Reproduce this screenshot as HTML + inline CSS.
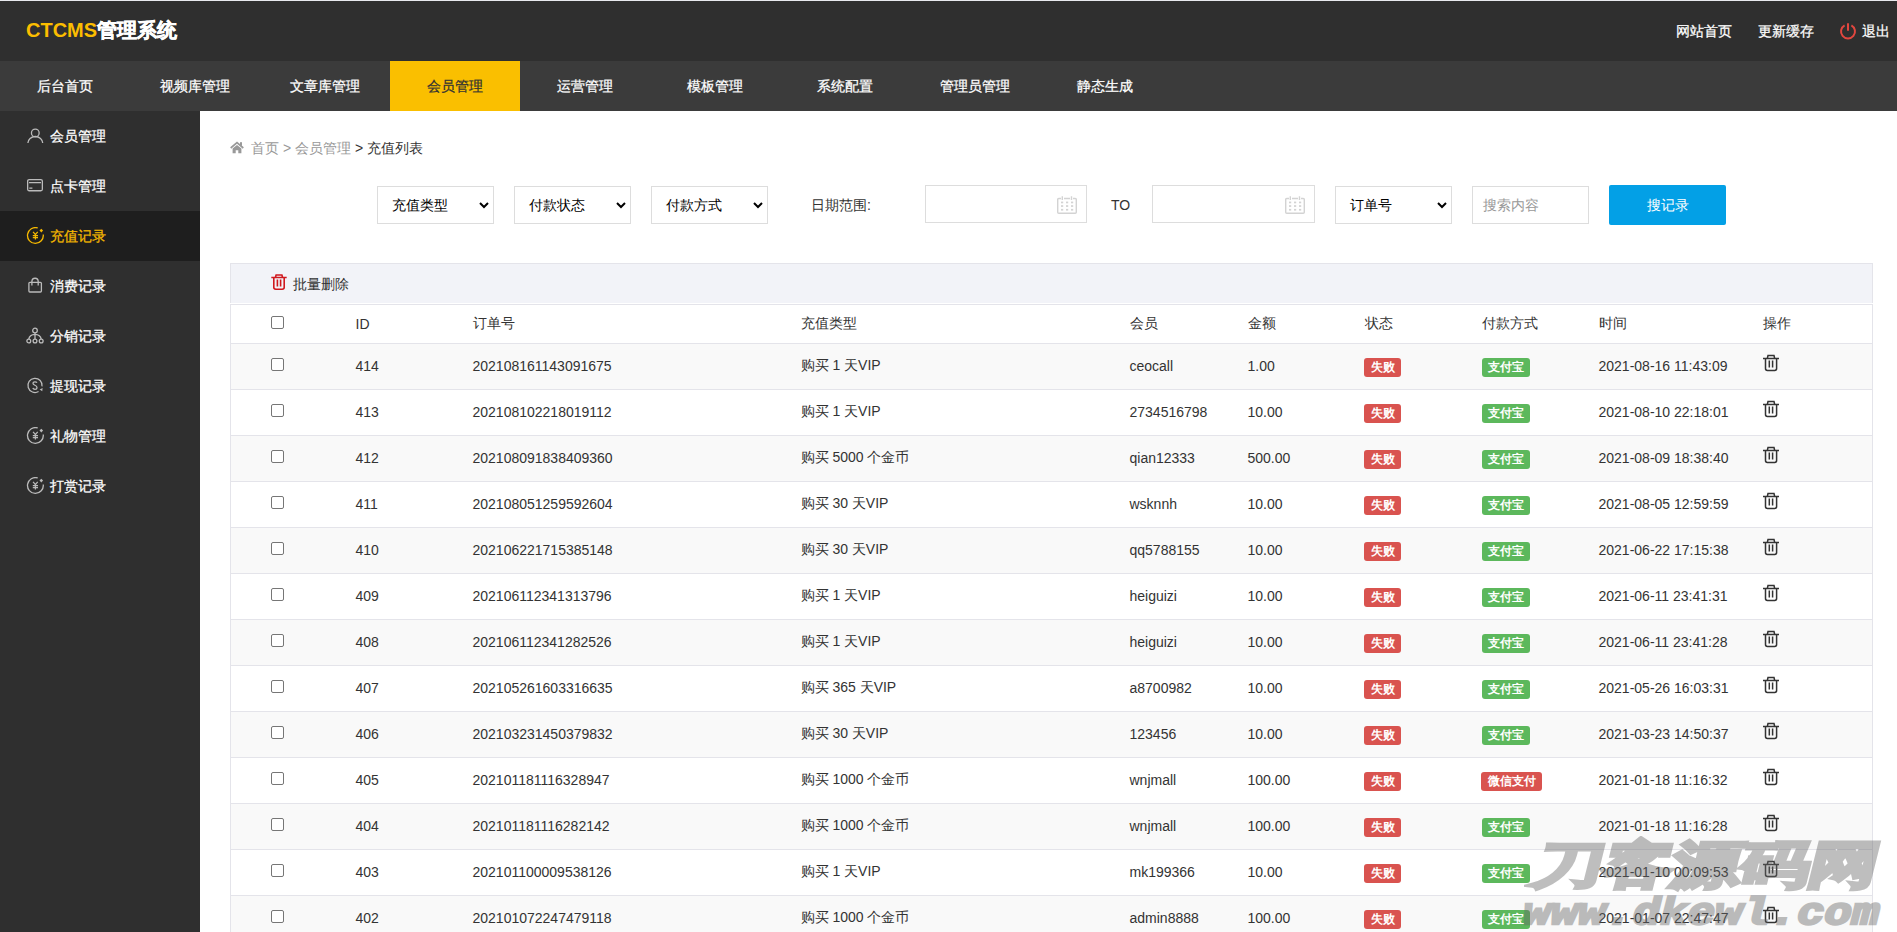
<!DOCTYPE html>
<html><head><meta charset="utf-8">
<style>
*{margin:0;padding:0;box-sizing:border-box}
html,body{width:1897px;height:932px;overflow:hidden;background:#fff;font-family:"Liberation Sans",sans-serif;font-size:14px;color:#333}
#top{position:absolute;left:0;top:0;width:1897px;height:61px;background:#2f2f2f;border-top:1px solid #e8e9ee}
#logo{position:absolute;left:26px;top:15px;font-size:20px;font-weight:bold;color:#fff;line-height:28px;white-space:nowrap}
#logo b{color:#fbbd00}
#tr{position:absolute;left:0;top:0;width:1897px;height:60px;color:#fff;font-size:14px}
#tr span{position:absolute;top:20px;line-height:20px;white-space:nowrap;-webkit-text-stroke:0.25px currentColor}
#nav{position:absolute;left:0;top:61px;width:1897px;height:50px;background:#3b3b3b}
#nav a{position:absolute;top:0;width:130px;height:50px;line-height:50px;text-align:center;color:#fff;text-decoration:none;font-size:14px;-webkit-text-stroke:0.25px currentColor}
#nav a.on{background:#fabf00;color:#333}
#side{position:absolute;left:0;top:111px;width:200px;height:821px;background:#2f2f2f}
#side div{position:absolute;left:0;width:200px;height:50px;line-height:50px;color:#fff;font-size:14px}
#side div.on{background:#1e1e1e;color:#f5b800}
#side div span{position:absolute;left:50px;top:0;-webkit-text-stroke:0.25px currentColor}
#side svg{position:absolute;left:26px;top:16px}
#crumb{position:absolute;left:230px;top:138px;line-height:20px;color:#999;font-size:14px;white-space:nowrap}
#crumb i{font-style:normal}
.sel{position:absolute;top:186px;height:38px;border:1px solid #ddd;background:#fff;color:#000;font-size:14px;line-height:36px;padding-left:14px}
.sel svg{position:absolute;right:4px;top:14px}
.inp{position:absolute;top:185px;height:38px;border:1px solid #ddd;background:#fff}
.lbl{position:absolute;top:195px;line-height:20px;color:#333;font-size:14px;white-space:nowrap}
#btn{position:absolute;left:1609px;top:185px;width:117px;height:40px;background:#03a0e6;border-radius:2px;color:#fff;text-align:center;line-height:40px;font-size:14px}
#tool{position:absolute;left:230px;top:263px;width:1643px;height:40px;background:#f2f3f8;border:1px solid #e4e4ea;border-bottom:none}
#tool span{position:absolute;left:62px;top:10px;line-height:20px;color:#333}
#tool svg{position:absolute;left:40px;top:9px}
table{position:absolute;left:230px;top:304px;width:1643px;border-collapse:collapse;table-layout:fixed}
td,th{font-weight:normal;text-align:left;border:1px solid #e4e4ea;border-left:none;border-right:none;color:#333;font-size:14px;white-space:nowrap;padding:0 0 2px 0}
tr{height:46px}
tr.hd{height:39px}
tr.hd td{padding-bottom:0}
tr.hd .cb{top:-3px}
tr.odd td{background:#f9f9f9}
table tr td:first-child, table tr th:first-child{border-left:1px solid #e4e4ea}
table tr td:last-child, table tr th:last-child{border-right:1px solid #e4e4ea}
.cb{display:inline-block;width:13px;height:13px;border:1px solid #767676;border-radius:2px;background:#fff;vertical-align:middle;margin-left:40px;position:relative;top:-2px}
.badge{display:inline-block;height:19px;line-height:19px;padding:0 6px;border-radius:3px;color:#fff;font-size:12px;font-weight:bold}
.br{background:#d9534f}
td .badge{position:relative;top:2px}
td .badge.br{margin-left:-1px;padding:0 6px 0 7px}
.bg{background:#5cb85c}
.tr{vertical-align:middle;position:relative;top:-3px}
#wm1{position:absolute;left:1544px;top:835px;color:#666;-webkit-text-stroke:4px #666;opacity:.42;font-weight:bold;font-size:50px;line-height:60px;white-space:nowrap;transform-origin:0 0;transform:skewX(-14deg) scaleX(1.37)}
#wm2{position:absolute;left:1529px;top:892px;color:#666;-webkit-text-stroke:2.5px #666;opacity:.42;font-weight:bold;font-family:"Liberation Mono",monospace;font-size:38px;line-height:44px;white-space:nowrap;transform-origin:0 0;transform:skewX(-14deg) scaleX(1.2)}
</style></head><body>
<div id="top">
  <div id="logo"><b>CTCMS</b><span style="-webkit-text-stroke:0.5px #fff">管理系统</span></div>
  <div id="tr">
    <span style="left:1676px">网站首页</span>
    <span style="left:1758px">更新缓存</span>
    <svg style="position:absolute;left:1839px;top:21px" width="18" height="18" viewBox="0 0 18 18"><path d="M5.6 3.3A7 7 0 1 0 12.4 3.3" fill="none" stroke="#e2473f" stroke-width="2"/><path d="M9 1.2v7.5" stroke="#e2473f" stroke-width="2"/></svg>
    <span style="left:1862px">退出</span>
  </div>
</div>
<div id="nav">
  <a style="left:0">后台首页</a>
  <a style="left:130px">视频库管理</a>
  <a style="left:260px">文章库管理</a>
  <a style="left:390px" class="on">会员管理</a>
  <a style="left:520px">运营管理</a>
  <a style="left:650px">模板管理</a>
  <a style="left:780px">系统配置</a>
  <a style="left:910px">管理员管理</a>
  <a style="left:1040px">静态生成</a>
</div>
<div id="side">
  <div style="top:0"><svg width="18" height="18" viewBox="0 0 18 18"><g fill="none" stroke="#bbb" stroke-width="1.3"><circle cx="9.3" cy="5.9" r="3.85"/><path d="M1.9 16A7.4 6.5 0 0 1 16.7 16"/></g></svg><span>会员管理</span></div>
  <div style="top:50px"><svg width="18" height="18" viewBox="0 0 18 18"><g fill="none" stroke="#bbb" stroke-width="1.3"><rect x="1.65" y="2.55" width="14.7" height="11.2" rx="1.5"/><path d="M3 5.6H15M3.3 11.2H6.4"/></g></svg><span>点卡管理</span></div>
  <div style="top:100px" class="on"><svg width="18" height="18" viewBox="0 0 18 18"><g fill="none" stroke="#f5b800" stroke-width="1.3"><path d="M17.24 7.54A7.9 7.9 0 1 1 11.76 0.96"/><path d="M7.1 4.9L9.4 7.6L11.7 4.9M6.8 8.7H12M6.8 10.6H12M9.4 7.6V12.4"/></g><path d="M15.3 1.7L17.1 3.6L15.3 5.5L13.5 3.6Z" fill="#f5b800"/></svg><span>充值记录</span></div>
  <div style="top:150px"><svg width="18" height="18" viewBox="0 0 18 18"><g fill="none" stroke="#bbb" stroke-width="1.3"><rect x="2.9" y="5.3" width="12.5" height="9.7" rx="1"/><path d="M5.9 8.5V4.4A3.15 3.15 0 0 1 12.2 4.4V8.5"/></g></svg><span>消费记录</span></div>
  <div style="top:200px"><svg width="18" height="18" viewBox="0 0 18 18"><g fill="none" stroke="#bbb" stroke-width="1.3"><circle cx="9" cy="3.5" r="2.3"/><circle cx="2.8" cy="14" r="1.9"/><circle cx="9" cy="14" r="1.9"/><circle cx="15.2" cy="14" r="1.9"/><path d="M9 5.8V12.1M2.8 12.1Q3.5 7.6 9 7.4Q14.5 7.6 15.2 12.1"/></g></svg><span>分销记录</span></div>
  <div style="top:250px"><svg width="18" height="18" viewBox="0 0 18 18"><g fill="none" stroke="#bbb" stroke-width="1.25"><path d="M12.55 14.55A7.1 7.1 0 1 1 16.03 9.39"/><path d="M11 5.7C10.6 5.1 9.9 4.8 9 4.8C7.8 4.8 7 5.5 7 6.5C7 8.6 11 8 11 10.4C11 11.6 10.1 12.3 8.9 12.3C7.9 12.3 7.1 11.8 6.8 11.1"/></g><path d="M13.6 12.6L16.6 10.9L16.3 14.3Z" fill="#bbb"/></svg><span>提现记录</span></div>
  <div style="top:300px"><svg width="18" height="18" viewBox="0 0 18 18"><g fill="none" stroke="#bbb" stroke-width="1.3"><path d="M17.24 7.54A7.9 7.9 0 1 1 11.76 0.96"/><path d="M7.1 4.9L9.4 7.6L11.7 4.9M6.8 8.7H12M6.8 10.6H12M9.4 7.6V12.4"/></g><path d="M15.3 1.7L17.1 3.6L15.3 5.5L13.5 3.6Z" fill="#bbb"/></svg><span>礼物管理</span></div>
  <div style="top:350px"><svg width="18" height="18" viewBox="0 0 18 18"><g fill="none" stroke="#bbb" stroke-width="1.3"><path d="M17.24 7.54A7.9 7.9 0 1 1 11.76 0.96"/><path d="M7.1 4.9L9.4 7.6L11.7 4.9M6.8 8.7H12M6.8 10.6H12M9.4 7.6V12.4"/></g><path d="M15.3 1.7L17.1 3.6L15.3 5.5L13.5 3.6Z" fill="#bbb"/></svg><span>打赏记录</span></div>
</div>
<div id="crumb"><svg width="14" height="13" viewBox="0 0 14 13" style="position:absolute;left:0;top:3px"><path d="M0.7 7L7 1.7L13.3 7" fill="none" stroke="#999" stroke-width="1.7"/><rect x="10" y="1.2" width="2" height="3.6" fill="#999"/><path d="M2.6 7.6L7 3.9L11.4 7.6V12.2H8.3V9.2H5.7V12.2H2.6Z" fill="#999"/></svg><i style="position:absolute;left:21px">首页</i><i style="position:absolute;left:53px">&gt;</i><i style="position:absolute;left:65px">会员管理</i><i style="position:absolute;left:125px;color:#333">&gt; 充值列表</i></div>

<div class="sel" style="left:377px;width:117px">充值类型<svg width="10" height="8" viewBox="0 0 10 8"><path d="M1 2l4 4l4-4" fill="none" stroke="#000" stroke-width="2"/></svg></div>
<div class="sel" style="left:514px;width:117px">付款状态<svg width="10" height="8" viewBox="0 0 10 8"><path d="M1 2l4 4l4-4" fill="none" stroke="#000" stroke-width="2"/></svg></div>
<div class="sel" style="left:651px;width:117px">付款方式<svg width="10" height="8" viewBox="0 0 10 8"><path d="M1 2l4 4l4-4" fill="none" stroke="#000" stroke-width="2"/></svg></div>
<div class="lbl" style="left:811px">日期范围:</div>
<div class="inp" style="left:925px;width:162px"><svg style="position:absolute;right:9px;top:10px" width="20" height="18" viewBox="0 0 20 18"><g fill="none" stroke="#d3d3d3" stroke-width="1.4"><path d="M4 2.5H1.8Q0.7 2.5 0.7 3.6V16.2Q0.7 17.3 1.8 17.3H18.2Q19.3 17.3 19.3 16.2V3.6Q19.3 2.5 18.2 2.5H16M7 2.5H13M5.3 0.3V4M14.5 0.3V4"/></g><g fill="#d3d3d3"><rect x="4" y="5.6" width="2.2" height="1.7"/><rect x="9" y="5.6" width="2.2" height="1.7"/><rect x="14" y="5.6" width="2.2" height="1.7"/><rect x="4" y="9.2" width="2.2" height="1.7"/><rect x="9" y="9.2" width="2.2" height="1.7"/><rect x="14" y="9.2" width="2.2" height="1.7"/><rect x="4" y="12.9" width="2.2" height="1.7"/><rect x="9" y="12.9" width="2.2" height="1.7"/><rect x="14" y="12.9" width="2.2" height="1.7"/></g></svg></div>
<div class="lbl" style="left:1111px">TO</div>
<div class="inp" style="left:1152px;width:163px"><svg style="position:absolute;right:9px;top:10px" width="20" height="18" viewBox="0 0 20 18"><g fill="none" stroke="#d3d3d3" stroke-width="1.4"><path d="M4 2.5H1.8Q0.7 2.5 0.7 3.6V16.2Q0.7 17.3 1.8 17.3H18.2Q19.3 17.3 19.3 16.2V3.6Q19.3 2.5 18.2 2.5H16M7 2.5H13M5.3 0.3V4M14.5 0.3V4"/></g><g fill="#d3d3d3"><rect x="4" y="5.6" width="2.2" height="1.7"/><rect x="9" y="5.6" width="2.2" height="1.7"/><rect x="14" y="5.6" width="2.2" height="1.7"/><rect x="4" y="9.2" width="2.2" height="1.7"/><rect x="9" y="9.2" width="2.2" height="1.7"/><rect x="14" y="9.2" width="2.2" height="1.7"/><rect x="4" y="12.9" width="2.2" height="1.7"/><rect x="9" y="12.9" width="2.2" height="1.7"/><rect x="14" y="12.9" width="2.2" height="1.7"/></g></svg></div>
<div class="sel" style="left:1335px;width:117px">订单号<svg width="10" height="8" viewBox="0 0 10 8"><path d="M1 2l4 4l4-4" fill="none" stroke="#000" stroke-width="2"/></svg></div>
<div class="sel" style="left:1472px;width:117px;color:#999;padding-left:10px">搜索内容</div>
<div id="btn">搜记录</div>

<div id="tool"><svg width="16" height="18" viewBox="0 0 16 18"><path d="M0.3 4.5H15.7M4.4 4.5L5.1 2H10.9L11.6 4.5M2.8 4.5V14.6Q2.8 16.2 4.8 16.2H11.2Q13.2 16.2 13.2 14.6V4.5M6.4 6.6V13.4M9.6 6.6V13.4" fill="none" stroke="#d0191f" stroke-width="1.6"/></svg><span>批量删除</span></div>
<table>
<colgroup><col style="width:125px"><col style="width:117px"><col style="width:328px"><col style="width:329px"><col style="width:118px"><col style="width:117px"><col style="width:117px"><col style="width:117px"><col style="width:164px"><col></colgroup>
<tr class="hd"><td class="c0"><span class="cb"></span></td><td>ID</td><td>订单号</td><td>充值类型</td><td>会员</td><td>金额</td><td>状态</td><td>付款方式</td><td>时间</td><td>操作</td></tr>
<tr class="odd"><td class="c0"><span class="cb"></span></td><td>414</td><td>202108161143091675</td><td>购买 1 天VIP</td><td>ceocall</td><td>1.00</td><td><span class="badge br">失败</span></td><td><span class="badge bg">支付宝</span></td><td>2021-08-16 11:43:09</td><td><svg class="tr" width="16" height="18" viewBox="0 0 16 18"><path d="M0 4.5H16M4.3 4.5L5 1.5H11L11.7 4.5M2.5 4.5V14.5Q2.5 16.4 4.4 16.4H11.7Q13.6 16.4 13.6 14.5V4.5M6.3 6.6V13.4M9.6 6.6V13.4" fill="none" stroke="#333" stroke-width="1.5"/></svg></td></tr>
<tr class="even"><td class="c0"><span class="cb"></span></td><td>413</td><td>202108102218019112</td><td>购买 1 天VIP</td><td>2734516798</td><td>10.00</td><td><span class="badge br">失败</span></td><td><span class="badge bg">支付宝</span></td><td>2021-08-10 22:18:01</td><td><svg class="tr" width="16" height="18" viewBox="0 0 16 18"><path d="M0 4.5H16M4.3 4.5L5 1.5H11L11.7 4.5M2.5 4.5V14.5Q2.5 16.4 4.4 16.4H11.7Q13.6 16.4 13.6 14.5V4.5M6.3 6.6V13.4M9.6 6.6V13.4" fill="none" stroke="#333" stroke-width="1.5"/></svg></td></tr>
<tr class="odd"><td class="c0"><span class="cb"></span></td><td>412</td><td>202108091838409360</td><td>购买 5000 个金币</td><td>qian12333</td><td>500.00</td><td><span class="badge br">失败</span></td><td><span class="badge bg">支付宝</span></td><td>2021-08-09 18:38:40</td><td><svg class="tr" width="16" height="18" viewBox="0 0 16 18"><path d="M0 4.5H16M4.3 4.5L5 1.5H11L11.7 4.5M2.5 4.5V14.5Q2.5 16.4 4.4 16.4H11.7Q13.6 16.4 13.6 14.5V4.5M6.3 6.6V13.4M9.6 6.6V13.4" fill="none" stroke="#333" stroke-width="1.5"/></svg></td></tr>
<tr class="even"><td class="c0"><span class="cb"></span></td><td>411</td><td>202108051259592604</td><td>购买 30 天VIP</td><td>wsknnh</td><td>10.00</td><td><span class="badge br">失败</span></td><td><span class="badge bg">支付宝</span></td><td>2021-08-05 12:59:59</td><td><svg class="tr" width="16" height="18" viewBox="0 0 16 18"><path d="M0 4.5H16M4.3 4.5L5 1.5H11L11.7 4.5M2.5 4.5V14.5Q2.5 16.4 4.4 16.4H11.7Q13.6 16.4 13.6 14.5V4.5M6.3 6.6V13.4M9.6 6.6V13.4" fill="none" stroke="#333" stroke-width="1.5"/></svg></td></tr>
<tr class="odd"><td class="c0"><span class="cb"></span></td><td>410</td><td>202106221715385148</td><td>购买 30 天VIP</td><td>qq5788155</td><td>10.00</td><td><span class="badge br">失败</span></td><td><span class="badge bg">支付宝</span></td><td>2021-06-22 17:15:38</td><td><svg class="tr" width="16" height="18" viewBox="0 0 16 18"><path d="M0 4.5H16M4.3 4.5L5 1.5H11L11.7 4.5M2.5 4.5V14.5Q2.5 16.4 4.4 16.4H11.7Q13.6 16.4 13.6 14.5V4.5M6.3 6.6V13.4M9.6 6.6V13.4" fill="none" stroke="#333" stroke-width="1.5"/></svg></td></tr>
<tr class="even"><td class="c0"><span class="cb"></span></td><td>409</td><td>202106112341313796</td><td>购买 1 天VIP</td><td>heiguizi</td><td>10.00</td><td><span class="badge br">失败</span></td><td><span class="badge bg">支付宝</span></td><td>2021-06-11 23:41:31</td><td><svg class="tr" width="16" height="18" viewBox="0 0 16 18"><path d="M0 4.5H16M4.3 4.5L5 1.5H11L11.7 4.5M2.5 4.5V14.5Q2.5 16.4 4.4 16.4H11.7Q13.6 16.4 13.6 14.5V4.5M6.3 6.6V13.4M9.6 6.6V13.4" fill="none" stroke="#333" stroke-width="1.5"/></svg></td></tr>
<tr class="odd"><td class="c0"><span class="cb"></span></td><td>408</td><td>202106112341282526</td><td>购买 1 天VIP</td><td>heiguizi</td><td>10.00</td><td><span class="badge br">失败</span></td><td><span class="badge bg">支付宝</span></td><td>2021-06-11 23:41:28</td><td><svg class="tr" width="16" height="18" viewBox="0 0 16 18"><path d="M0 4.5H16M4.3 4.5L5 1.5H11L11.7 4.5M2.5 4.5V14.5Q2.5 16.4 4.4 16.4H11.7Q13.6 16.4 13.6 14.5V4.5M6.3 6.6V13.4M9.6 6.6V13.4" fill="none" stroke="#333" stroke-width="1.5"/></svg></td></tr>
<tr class="even"><td class="c0"><span class="cb"></span></td><td>407</td><td>202105261603316635</td><td>购买 365 天VIP</td><td>a8700982</td><td>10.00</td><td><span class="badge br">失败</span></td><td><span class="badge bg">支付宝</span></td><td>2021-05-26 16:03:31</td><td><svg class="tr" width="16" height="18" viewBox="0 0 16 18"><path d="M0 4.5H16M4.3 4.5L5 1.5H11L11.7 4.5M2.5 4.5V14.5Q2.5 16.4 4.4 16.4H11.7Q13.6 16.4 13.6 14.5V4.5M6.3 6.6V13.4M9.6 6.6V13.4" fill="none" stroke="#333" stroke-width="1.5"/></svg></td></tr>
<tr class="odd"><td class="c0"><span class="cb"></span></td><td>406</td><td>202103231450379832</td><td>购买 30 天VIP</td><td>123456</td><td>10.00</td><td><span class="badge br">失败</span></td><td><span class="badge bg">支付宝</span></td><td>2021-03-23 14:50:37</td><td><svg class="tr" width="16" height="18" viewBox="0 0 16 18"><path d="M0 4.5H16M4.3 4.5L5 1.5H11L11.7 4.5M2.5 4.5V14.5Q2.5 16.4 4.4 16.4H11.7Q13.6 16.4 13.6 14.5V4.5M6.3 6.6V13.4M9.6 6.6V13.4" fill="none" stroke="#333" stroke-width="1.5"/></svg></td></tr>
<tr class="even"><td class="c0"><span class="cb"></span></td><td>405</td><td>202101181116328947</td><td>购买 1000 个金币</td><td>wnjmall</td><td>100.00</td><td><span class="badge br">失败</span></td><td><span class="badge br">微信支付</span></td><td>2021-01-18 11:16:32</td><td><svg class="tr" width="16" height="18" viewBox="0 0 16 18"><path d="M0 4.5H16M4.3 4.5L5 1.5H11L11.7 4.5M2.5 4.5V14.5Q2.5 16.4 4.4 16.4H11.7Q13.6 16.4 13.6 14.5V4.5M6.3 6.6V13.4M9.6 6.6V13.4" fill="none" stroke="#333" stroke-width="1.5"/></svg></td></tr>
<tr class="odd"><td class="c0"><span class="cb"></span></td><td>404</td><td>202101181116282142</td><td>购买 1000 个金币</td><td>wnjmall</td><td>100.00</td><td><span class="badge br">失败</span></td><td><span class="badge bg">支付宝</span></td><td>2021-01-18 11:16:28</td><td><svg class="tr" width="16" height="18" viewBox="0 0 16 18"><path d="M0 4.5H16M4.3 4.5L5 1.5H11L11.7 4.5M2.5 4.5V14.5Q2.5 16.4 4.4 16.4H11.7Q13.6 16.4 13.6 14.5V4.5M6.3 6.6V13.4M9.6 6.6V13.4" fill="none" stroke="#333" stroke-width="1.5"/></svg></td></tr>
<tr class="even"><td class="c0"><span class="cb"></span></td><td>403</td><td>202101100009538126</td><td>购买 1 天VIP</td><td>mk199366</td><td>10.00</td><td><span class="badge br">失败</span></td><td><span class="badge bg">支付宝</span></td><td>2021-01-10 00:09:53</td><td><svg class="tr" width="16" height="18" viewBox="0 0 16 18"><path d="M0 4.5H16M4.3 4.5L5 1.5H11L11.7 4.5M2.5 4.5V14.5Q2.5 16.4 4.4 16.4H11.7Q13.6 16.4 13.6 14.5V4.5M6.3 6.6V13.4M9.6 6.6V13.4" fill="none" stroke="#333" stroke-width="1.5"/></svg></td></tr>
<tr class="odd"><td class="c0"><span class="cb"></span></td><td>402</td><td>202101072247479118</td><td>购买 1000 个金币</td><td>admin8888</td><td>100.00</td><td><span class="badge br">失败</span></td><td><span class="badge bg">支付宝</span></td><td>2021-01-07 22:47:47</td><td><svg class="tr" width="16" height="18" viewBox="0 0 16 18"><path d="M0 4.5H16M4.3 4.5L5 1.5H11L11.7 4.5M2.5 4.5V14.5Q2.5 16.4 4.4 16.4H11.7Q13.6 16.4 13.6 14.5V4.5M6.3 6.6V13.4M9.6 6.6V13.4" fill="none" stroke="#333" stroke-width="1.5"/></svg></td></tr>
</table>
<div id="wm1">刀客源码网</div><div id="wm2">www.dkewl.com</div>
</body></html>
